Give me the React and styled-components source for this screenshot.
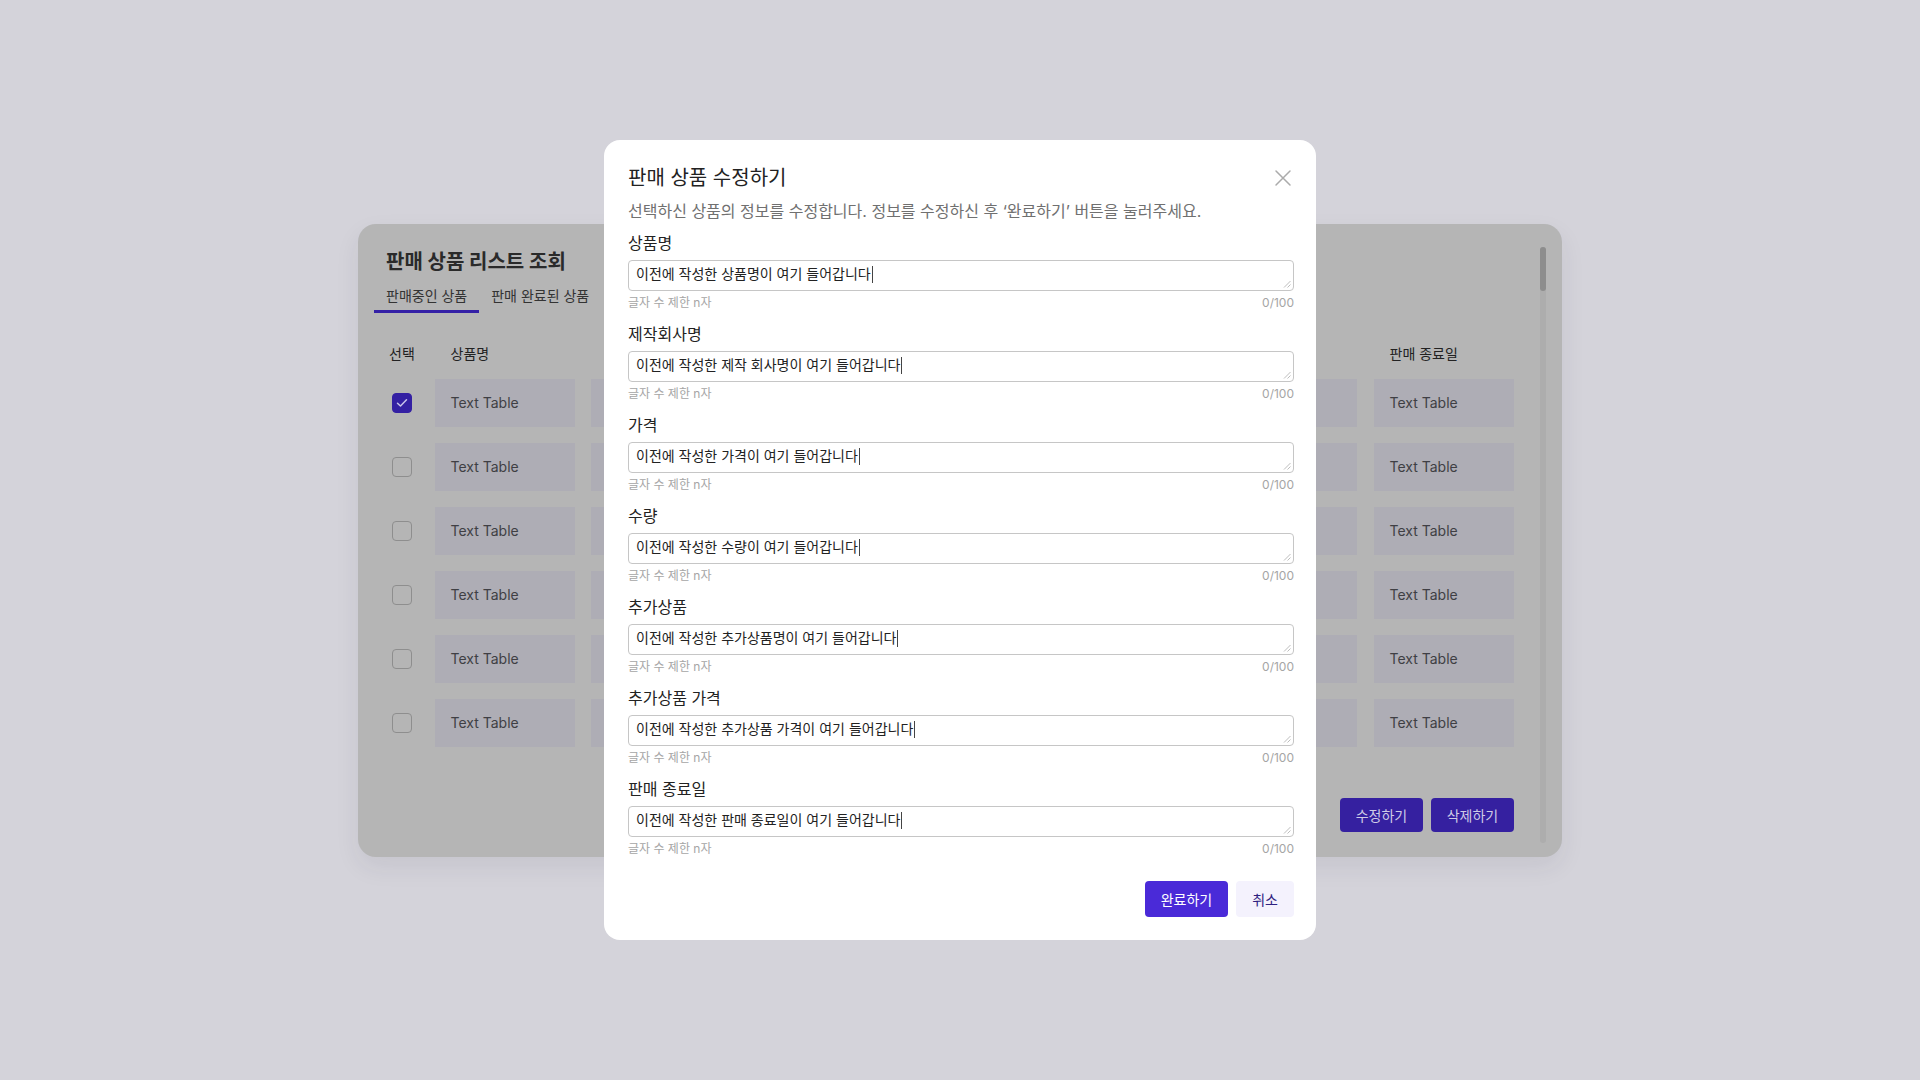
import styled, { createGlobalStyle } from "styled-components";

const GlobalStyle = createGlobalStyle`
    * { box-sizing: border-box; }
    html, body {
        margin: 0;
        padding: 0;
        width: 100%;
        height: 100%;
    }
    body {
        background: #d4d3da;
        font-family: Inter, "Noto Sans CJK KR", sans-serif;
        color: #222;
    }
`;

const Pagina = styled.div`
    width: 1920px;
    height: 1080px;
    display: flex;
    align-items: center;
    justify-content: center;
    position: relative;
`;

/* ---------- tarjeta de fondo (lista) ---------- */

const Tarjeta = styled.section`
    width: 1204px;
    height: 633px;
    background: #b5b5b5;
    border-radius: 18px;
    box-shadow: 0 10px 24px rgba(40, 40, 60, 0.08);
    padding: 24px 48px 25px 28px;
    display: flex;
    flex-direction: column;
    position: relative;
`;

const TituloTarjeta = styled.h1`
    margin: 0;
    font-size: 20px;
    line-height: 28px;
    font-weight: 700;
    color: #2a2a2a;
`;

const Tabs = styled.div`
    display: flex;
    margin: 10px 0 0 -12px;
`;

const Tab = styled.div`
    padding: 0 12px 4px;
    font-size: 14px;
    line-height: 20px;
    color: #333;
    border-bottom: 3px solid ${({ $activo }) => ($activo ? "#3420a6" : "transparent")};
`;

const Tabla = styled.div`
    display: grid;
    grid-template-columns: 32px repeat(7, 140px);
    column-gap: 16.5px;
    row-gap: 16px;
    margin-top: 31px;
`;

const Encabezado = styled.div`
    font-size: 14px;
    line-height: 20px;
    font-weight: 400;
    color: #222;
    padding-left: ${({ $centro }) => ($centro ? "0" : "16px")};
    text-align: ${({ $centro }) => ($centro ? "center" : "left")};
    margin-bottom: -1px;
    white-space: nowrap;
`;

const CeldaCheck = styled.div`
    display: flex;
    align-items: center;
    justify-content: center;
    height: 48px;
`;

const Check = styled.div`
    width: 20px;
    height: 20px;
    border-radius: 4px;
    display: flex;
    align-items: center;
    justify-content: center;
    background: ${({ $marcado }) => ($marcado ? "#3420a3" : "transparent")};
    border: 1px solid ${({ $marcado }) => ($marcado ? "#3420a3" : "#8e8e8e")};
`;

const Celda = styled.div`
    height: 48px;
    background: #aeadb5;
    display: flex;
    align-items: center;
    padding-left: 16px;
    font-size: 14px;
    color: #3f3f44;
`;

const AccionesTarjeta = styled.div`
    margin-top: auto;
    display: flex;
    justify-content: flex-end;
    gap: 8px;
`;

const BotonOscuro = styled.button`
    width: 83px;
    height: 34px;
    border: none;
    border-radius: 4px;
    background: #3520a0;
    color: #cfcbe6;
    font-family: inherit;
    font-size: 14px;
`;

const Scroll = styled.div`
    position: absolute;
    top: 23px;
    right: 16px;
    bottom: 14px;
    width: 6px;
    border-radius: 3px;
    background: #adadad;

    &::before {
        content: "";
        position: absolute;
        top: 0;
        left: 0;
        width: 6px;
        height: 44px;
        border-radius: 3px;
        background: #8d8d8d;
    }
`;

/* ---------- modal ---------- */

const Modal = styled.div`
    position: absolute;
    left: 604px;
    top: 140px;
    width: 712px;
    height: 800px;
    background: #fff;
    border-radius: 16px;
    padding: 24px 22px 23px 24px;
    display: flex;
    flex-direction: column;
`;

const CabeceraModal = styled.div`
    display: flex;
    align-items: center;
    justify-content: space-between;
`;

const TituloModal = styled.h2`
    margin: 0;
    font-size: 20px;
    line-height: 28px;
    font-weight: 400;
    color: #222;
`;

const Cerrar = styled.button`
    width: 18px;
    height: 18px;
    margin-right: 2px;
    padding: 0;
    border: none;
    background: none;
    display: flex;
`;

const Subtitulo = styled.p`
    margin: 8px 0 0;
    font-size: 16px;
    line-height: 22px;
    color: #707070;
`;

const Campos = styled.div`
    display: flex;
    flex-direction: column;
    gap: 12px;
    margin-top: 10px;
`;

const Campo = styled.div`
    display: flex;
    flex-direction: column;
`;

const Etiqueta = styled.label`
    font-size: 16px;
    line-height: 22px;
    font-weight: 400;
    color: #222;
`;

const AreaTexto = styled.div`
    margin-top: 6px;
    height: 31px;
    border: 1px solid #c6c6c6;
    border-radius: 4px;
    padding: 3px 7px;
    font-size: 14px;
    line-height: 20px;
    color: #222;
    position: relative;
    display: flex;
    align-items: flex-start;
`;

const Cursor = styled.span`
    display: inline-block;
    width: 1px;
    height: 17px;
    margin: 2px 0 0 1px;
    background: #444;
`;

const Agarre = styled.svg`
    position: absolute;
    right: 2px;
    bottom: 2px;
`;

const Ayuda = styled.div`
    margin-top: 4px;
    display: flex;
    justify-content: space-between;
    font-size: 12px;
    line-height: 16px;
    color: #a5a5a5;
`;

const PieModal = styled.div`
    margin-top: auto;
    display: flex;
    justify-content: flex-end;
    gap: 8px;
`;

const Boton = styled.button`
    height: 36px;
    padding: 0 16px;
    border: none;
    border-radius: 4px;
    background: ${({ $principal }) => ($principal ? "#4a2ad8" : "#f4f2fd")};
    color: ${({ $principal }) => ($principal ? "#fff" : "#2e2180")};
    font-family: inherit;
    font-size: 14px;
`;

const columnas = ["상품명", "제작회사명", "가격", "수량", "추가상품", "추가상품 가격", "판매 종료일"];

const campos = [
    { etiqueta: "상품명", valor: "이전에 작성한 상품명이 여기 들어갑니다" },
    { etiqueta: "제작회사명", valor: "이전에 작성한 제작 회사명이 여기 들어갑니다" },
    { etiqueta: "가격", valor: "이전에 작성한 가격이 여기 들어갑니다" },
    { etiqueta: "수량", valor: "이전에 작성한 수량이 여기 들어갑니다" },
    { etiqueta: "추가상품", valor: "이전에 작성한 추가상품명이 여기 들어갑니다" },
    { etiqueta: "추가상품 가격", valor: "이전에 작성한 추가상품 가격이 여기 들어갑니다" },
    { etiqueta: "판매 종료일", valor: "이전에 작성한 판매 종료일이 여기 들어갑니다" },
];

const filas = [true, false, false, false, false, false];

const IconoCheck = () => (
    <svg width="12" height="10" viewBox="0 0 12 10" fill="none">
        <path d="M1.5 5.2 4.5 8 10.5 1.8" stroke="#c9c3ea" strokeWidth="1.5" strokeLinecap="round" strokeLinejoin="round" />
    </svg>
);

const IconoCerrar = () => (
    <svg width="18" height="18" viewBox="0 0 18 18" fill="none">
        <path d="M2 2 16 16M16 2 2 16" stroke="#ababab" strokeWidth="1.5" strokeLinecap="round" />
    </svg>
);

export default function App() {
    return (
        <>
            <GlobalStyle />
            <Pagina>
                <Tarjeta>
                    <TituloTarjeta>판매 상품 리스트 조회</TituloTarjeta>
                    <Tabs>
                        <Tab $activo>판매중인 상품</Tab>
                        <Tab>판매 완료된 상품</Tab>
                    </Tabs>
                    <Tabla>
                        <Encabezado $centro>선택</Encabezado>
                        {columnas.map((c) => (
                            <Encabezado key={c}>{c}</Encabezado>
                        ))}
                        {filas.map((marcado, i) => (
                            <>
                                <CeldaCheck key={`c${i}`}>
                                    <Check $marcado={marcado}>{marcado && <IconoCheck />}</Check>
                                </CeldaCheck>
                                {columnas.map((c) => (
                                    <Celda key={`${i}-${c}`}>Text Table</Celda>
                                ))}
                            </>
                        ))}
                    </Tabla>
                    <AccionesTarjeta>
                        <BotonOscuro>수정하기</BotonOscuro>
                        <BotonOscuro>삭제하기</BotonOscuro>
                    </AccionesTarjeta>
                    <Scroll />
                </Tarjeta>

                <Modal>
                    <CabeceraModal>
                        <TituloModal>판매 상품 수정하기</TituloModal>
                        <Cerrar aria-label="닫기">
                            <IconoCerrar />
                        </Cerrar>
                    </CabeceraModal>
                    <Subtitulo>선택하신 상품의 정보를 수정합니다. 정보를 수정하신 후 ‘완료하기’ 버튼을 눌러주세요.</Subtitulo>
                    <Campos>
                        {campos.map((campo) => (
                            <Campo key={campo.etiqueta}>
                                <Etiqueta>{campo.etiqueta}</Etiqueta>
                                <AreaTexto>
                                    {campo.valor}
                                    <Cursor />
                                    <Agarre width="8" height="8" viewBox="0 0 8 8">
                                        <path d="M7.5 1 1 7.5M7.5 4.5 4.5 7.5" stroke="#b5b5b5" strokeWidth="0.9" />
                                    </Agarre>
                                </AreaTexto>
                                <Ayuda>
                                    <span>글자 수 제한 n자</span>
                                    <span>0/100</span>
                                </Ayuda>
                            </Campo>
                        ))}
                    </Campos>
                    <PieModal>
                        <Boton $principal>완료하기</Boton>
                        <Boton>취소</Boton>
                    </PieModal>
                </Modal>
            </Pagina>
        </>
    );
}
